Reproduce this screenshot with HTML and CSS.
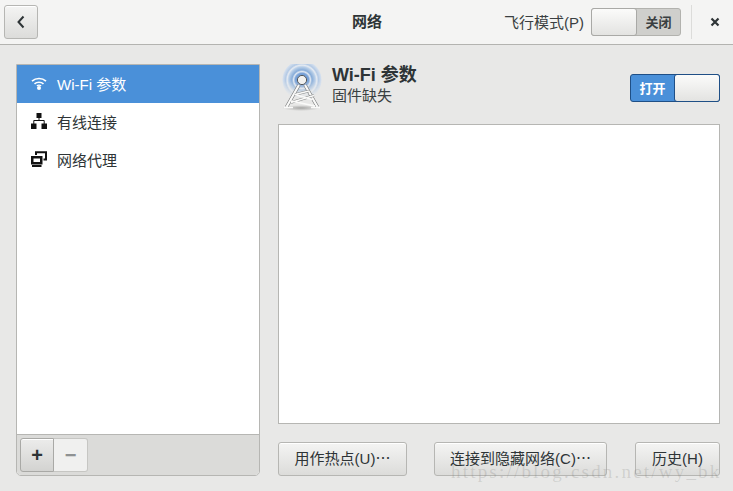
FILE: index.html
```html
<!DOCTYPE html>
<html lang="zh">
<head>
<meta charset="utf-8">
<title>网络</title>
<link rel="stylesheet" href="styles.css">
</head>
<body>
<div class="window">
  <header class="titlebar">
    <button class="btn back" aria-label="返回">
      <svg width="10" height="14" viewBox="0 0 10 14"><path d="M7.500 1.500 2.500 7l5 5.500" fill="none" stroke="#2e3436" stroke-width="2"/></svg>
    </button>
    <div class="title">网络</div>
    <div class="airplane">
      <span class="airplane-label">飞行模式(P)</span>
      <div class="switch off">
        <span class="knob"></span>
        <span class="state">关闭</span>
      </div>
    </div>
    <div class="sep"></div>
    <button class="close" aria-label="关闭">
      <svg width="10" height="10" viewBox="0 0 10 10"><path d="M1.500 1.500l7 7M8.500 1.500l-7 7" stroke="#2e3436" stroke-width="2.200" fill="none"/></svg>
    </button>
  </header>
  <main class="content">
    <aside class="sidebar">
      <ul class="list">
        <li class="row selected">
          <svg class="row-icon" width="16" height="16" viewBox="0 0 16 16"><g fill="none" stroke="#fff" stroke-width="1.700"><path d="M1 6.200C5 2.600 11 2.600 15 6.200"/><path d="M3.500 8.800C6 6.700 10 6.700 12.500 8.800"/></g><circle cx="8" cy="13" r="2" fill="#fff"/><path d="M5.800 10.800c1.300-.9 3.100-.9 4.400 0" fill="none" stroke="#fff" stroke-width="1.200"/></svg>
          <span>Wi-Fi 参数</span>
        </li>
        <li class="row">
          <svg class="row-icon" width="16" height="16" viewBox="0 0 16 16"><path fill="#111" d="M5.500 0h5v5h-5zM0 10.500h5.500V16H0zM10.500 10.500H16V16h-5.500z"/><path fill="none" stroke="#111" d="M8 5v3M2.800 11V7.500h10.400V11"/></svg>
          <span>有线连接</span>
        </li>
        <li class="row">
          <svg class="row-icon" width="16" height="16" viewBox="0 0 16 16"><path fill="#111" fill-rule="evenodd" d="M0 5h11.500v8.500H0zM2.500 7.500v3.500h6.500V7.500zM1 14h9.500v2H1z"/><path fill="none" stroke="#111" stroke-width="2" d="M5 4V1.200h10V8.500h-2.500"/></svg>
          <span>网络代理</span>
        </li>
      </ul>
      <div class="toolbar">
        <div class="group">
          <button class="btn tool add">+</button>
          <button class="tool remove">−</button>
        </div>
      </div>
    </aside>
    <section class="detail">
      <div class="device">
        <svg class="tower" width="46" height="48" viewBox="0 0 46 48">
          <defs>
            <radialGradient id="glow" gradientUnits="userSpaceOnUse" cx="24" cy="16" r="20">
              <stop offset="0" stop-color="#5f8fcb"/>
              <stop offset=".34" stop-color="#7aa3d8"/>
              <stop offset=".42" stop-color="#e3eaf3"/>
              <stop offset=".5" stop-color="#88add9"/>
              <stop offset=".66" stop-color="#b9cfe8"/>
              <stop offset=".74" stop-color="#e6ebf2"/>
              <stop offset=".82" stop-color="#b4cae5"/>
              <stop offset=".96" stop-color="#d5e0ee"/>
              <stop offset="1" stop-color="#dde4ec" stop-opacity="0"/>
            </radialGradient>
            <linearGradient id="fade" gradientUnits="userSpaceOnUse" x1="0" y1="16" x2="0" y2="34">
              <stop offset="0" stop-color="#fff"/>
              <stop offset="1" stop-color="#000"/>
            </linearGradient>
            <mask id="fademask"><rect width="46" height="48" fill="url(#fade)"/></mask>
            <radialGradient id="shadow"><stop offset="0" stop-color="#8a8a88" stop-opacity=".7"/><stop offset="1" stop-color="#8a8a88" stop-opacity="0"/></radialGradient>
          </defs>
          <circle cx="24" cy="16" r="20" fill="url(#glow)" mask="url(#fademask)"/>
          <ellipse cx="23" cy="44" rx="19" ry="3" fill="url(#shadow)"/>
          <g fill="none" stroke="#77797a" stroke-width="3.400"><path d="M21 21 8.500 43M27 21l12.500 22"/></g>
          <g fill="none" stroke="#fafaf9" stroke-width="2.200"><path d="M21 21 8.500 43M27 21l12.500 22"/></g>
          <g fill="none" stroke="#8a8c8c" stroke-width="2.400"><path d="M17 30.500 31 27M13 38.500l23-7"/></g>
          <g fill="none" stroke="#fafaf9" stroke-width="1.500"><path d="M17 30.500 31 27M13 38.500l23-7M17 30.500l17 5M13 37l24 5M6 43.500h9M33 43.500h9"/></g>
          <circle cx="24" cy="16" r="4.600" fill="#f1f1ef" stroke="#55585a" stroke-width="1"/>
        </svg>
        <div class="device-text">
          <div class="device-name">Wi-Fi 参数</div>
          <div class="device-status">固件缺失</div>
        </div>
        <div class="switch on">
          <span class="state">打开</span>
          <span class="knob"></span>
        </div>
      </div>
      <div class="networks"></div>
      <div class="actions">
        <button class="btn action">用作热点(U)⋯</button>
        <button class="btn action">连接到隐藏网络(C)⋯</button>
        <button class="btn action">历史(H)</button>
      </div>
    </section>
  </main>
  <div class="watermark">https://blog.csdn.net/wy_bk</div>
</div>
</body>
</html>
```

FILE: styles.css
```css
* { box-sizing: border-box; }
html, body { margin: 0; padding: 0; }
body {
  width: 733px;
  height: 491px;
  overflow: hidden;
  font-family: "Liberation Sans", "Noto Sans CJK SC", sans-serif;
  font-size: 15px;
  color: #2e3436;
  background: #e8e8e7;
}
ul { list-style: none; margin: 0; padding: 0; }
button { font: inherit; color: inherit; padding: 0; margin: 0; }
.window { position: relative; width: 733px; height: 491px; display: flex; flex-direction: column; }
.btn {
  border: 1px solid #b6b6b3;
  border-radius: 3px;
  background: linear-gradient(#f4f4f3, #dcdcda);
  box-shadow: inset 0 1px 0 #fff;
}
.titlebar {
  height: 45px;
  flex: none;
  display: flex;
  align-items: center;
  padding: 0 0 0 4px;
  background: #f4f4f3;
  border-bottom: 1px solid #b3b3b0;
  position: relative;
}
.back { width: 34px; height: 34px; display: flex; align-items: center; justify-content: center; }
.title {
  position: absolute;
  left: 352px;
  top: 12px;
  font-weight: bold;
  font-size: 15px;
  line-height: 20px;
}
.airplane { margin-left: auto; display: flex; align-items: center; gap: 7px; }
.airplane-label { font-size: 15px; color: #3a3f41; margin-bottom: 2px; }
.switch {
  width: 90px;
  height: 28px;
  display: flex;
  align-items: stretch;
  border-radius: 3px;
  border: 1px solid #b2b2ae;
  font-size: 13px;
  font-weight: bold;
}
.switch .knob {
  width: 46px;
  border-radius: 3px;
  background: linear-gradient(#fbfbfa, #e3e3e1);
  border: 1px solid #a9a9a6;
  margin: -1px 0;
}
.switch .state { flex: 1; display: flex; align-items: center; justify-content: center; padding-bottom: 2px; }
.switch.off { background: #cfcfcc; }
.switch.off .knob { margin-left: -1px; }
.switch.off .state { color: #3a3f41; }
.switch.on { background: #4a90d9; border-color: #1f4f86; color: #fff; }
.switch.on .knob { margin-right: -1px; border-color: #1f4f86; }
.sep { width: 1px; height: 34px; background: #dcdcda; margin-left: 10px; }
.close { width: 41px; height: 34px; border: 0; background: none; display: flex; align-items: center; justify-content: center; padding-left: 4px; }
.content {
  flex: 1;
  display: flex;
  align-items: flex-start;
  gap: 18px;
  padding: 19px 13px 0 16px;
}
.sidebar {
  width: 244px;
  height: 412px;
  flex: none;
  display: flex;
  flex-direction: column;
  border: 1px solid #b6b6b3;
  border-radius: 0 0 5px 5px;
  background: #fff;
  overflow: hidden;
}
.list { flex: 1; }
.row { height: 38px; display: flex; align-items: center; gap: 10px; padding: 0 0 2px 14px; font-size: 15px; color: #2e3436; }
.row .row-icon { flex: none; }
.row.selected { background: #4a90d9; color: #fff; }
.toolbar {
  height: 41px;
  flex: none;
  background: #dbdbd9;
  border-top: 1px solid #b6b6b3;
  padding: 3px 0 0 3px;
}
.group { display: flex; width: 68px; height: 34px; }
.tool { width: 34px; height: 34px; font-size: 20px; line-height: 30px; font-weight: bold; }
.add { border-radius: 3px 0 0 3px; background: linear-gradient(#ececeb, #d3d3d1); border-color: #a9a9a6; }
.remove { border: 1px solid #c6c6c3; border-left: 0; border-radius: 0 3px 3px 0; background: #f0f0ef; color: #8e9192; }
.detail { width: 442px; display: flex; flex-direction: column; flex: none; }
.device { height: 60px; display: flex; align-items: flex-start; position: relative; }
.tower { flex: none; margin: 0 8px 0 0; overflow: hidden; }
.device-text { flex: 1; }
.device-name { font-size: 18px; font-weight: bold; line-height: 22px; }
.device-status { font-size: 15px; line-height: 20px; color: #3a3f41; }
.device .switch { margin-top: 10px; }
.networks { height: 300px; background: #fff; border: 1px solid #b6b6b3; }
.actions { margin-top: 18px; display: flex; }
.action { height: 34px; padding: 0 0 3px; font-size: 15px; flex: none; white-space: nowrap; }
.action:nth-child(1) { width: 129px; }
.action:nth-child(2) { width: 173px; margin-left: 27px; }
.action:nth-child(3) { width: 85px; margin-left: auto; }
.watermark {
  position: absolute;
  left: 451px;
  top: 462px;
  font-family: "Liberation Serif", serif;
  font-size: 19px;
  line-height: 20px;
  letter-spacing: 2.200px;
  white-space: nowrap;
  color: rgba(120, 120, 118, .22);
  pointer-events: none;
}
```
